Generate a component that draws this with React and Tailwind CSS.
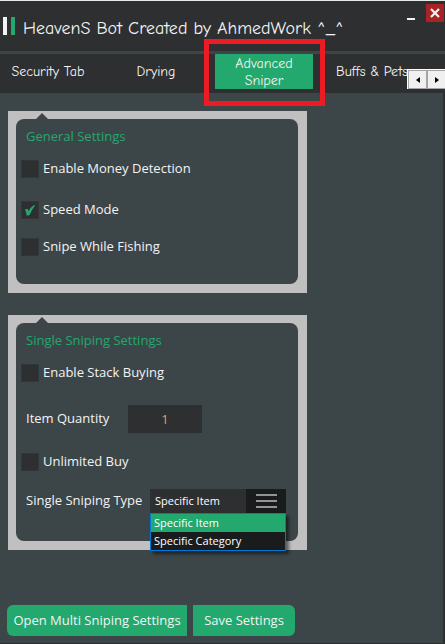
import { useState } from "react";

const tabs = ["Security Tab", "Drying", "Advanced Sniper", "Buffs & Pets"];
const types = ["Specific Item", "Specific Category"];

function Check({ label, defaultChecked = false }) {
  return (
    <label className="flex h-[18px] w-fit items-center gap-1 text-[13px] text-[#f3f3f3]">
      <span className="relative h-[18px] w-[18px] shrink-0">
        <input
          type="checkbox"
          defaultChecked={defaultChecked}
          className="peer block h-[18px] w-[18px] appearance-none border border-[#333638] bg-[#2d2f31]"
        />
        <svg
          viewBox="0 0 18 18"
          className="pointer-events-none absolute inset-0 hidden h-[18px] w-[18px] fill-[#23a86d] peer-checked:block"
        >
          <path d="M4 8.600 6.400 7.800Q7.200 8.800 7.500 10.200 9.600 6.200 12.600 4.200L14.200 4.200Q10.600 8.800 8.600 14L5.800 14.800Q5.200 11.400 4 8.600Z" />
        </svg>
      </span>
      {label}
    </label>
  );
}

function Group({ title, children }) {
  return (
    <section className="w-[299px] bg-[#c0c0c0] pt-2 pr-[9px] pb-[9px] pl-2">
      <div className="relative rounded-lg bg-[#3c4649] px-[5px] pt-[7px]">
        <svg viewBox="0 0 12 6" className="absolute -top-1.5 left-5 h-1.5 w-3 fill-[#3c4649]">
          <path d="M6 0 12 6H0Z" />
        </svg>
        <h2 className="pl-[5px] text-[13px] leading-5 text-[#23a86d]">{title}</h2>
        {children}
      </div>
    </section>
  );
}

export default function App() {
  const [active, setActive] = useState(2);
  const [type, setType] = useState(types[0]);

  return (
    <div className="relative flex min-h-screen flex-col overflow-hidden border-t border-[#e4eaea] bg-[#3c4649] font-['Open_Sans','Noto_Sans',sans-serif]">
      <header className="flex h-[50px] items-start justify-between bg-[#2d2f31] pl-[3px] pr-px">
        <div className="flex items-start gap-2 pt-4">
          <div className="flex gap-1">
            <span className="h-[18px] w-1 bg-[#f3f3f3]" />
            <span className="h-[18px] w-1 bg-[#23a86d]" />
          </div>
          <h1 className="whitespace-nowrap font-['Comic_Sans_MS','Comic_Neue','Open_Sans',sans-serif] text-[18px] leading-6 text-[#f3f3f3]">
            HeavenS Bot Created by AhmedWork ^_^
          </h1>
        </div>
        <div className="flex gap-[11px] pt-[3px]">
          <button aria-label="Minimize" className="flex h-[18px] w-2 items-end pb-0.5">
            <span className="h-0.5 w-2 bg-[#f3f3f3]" />
          </button>
          <button aria-label="Close" className="flex h-[18px] w-[18px] items-center justify-center bg-[#a82323]">
            <svg viewBox="0 0 10 10" className="h-2.5 w-2.5 stroke-[#f3f3f3]" strokeWidth="2.2">
              <path d="M1 1 9 9M9 1 1 9" />
            </svg>
          </button>
        </div>
      </header>

      <nav className="relative mt-[3px] flex h-[39px] items-start gap-2.5 bg-[#2d2f31]">
        {tabs.map((t, i) => (
          <button
            key={t}
            onClick={() => setActive(i)}
            className={
              "flex h-[35px] w-[98px] shrink-0 items-center justify-center px-2 font-['Comic_Sans_MS','Comic_Neue','Open_Sans',sans-serif] text-[14px] leading-[17px] text-[#f3f3f3] first:-ml-px " +
              (i === active ? "bg-[#23a86d]" : "")
            }
          >
            {t}
          </button>
        ))}
        <div className="absolute top-[15px] right-0 flex h-5 border-t border-l border-white">
          <button aria-label="Scroll left" className="flex w-[19px] items-center justify-center border border-[#a5a5a5] bg-[#f0f0f0]">
            <svg viewBox="0 0 4 6" className="h-1.5 w-1 fill-black"><path d="M4 0V6L0 3Z" /></svg>
          </button>
          <button aria-label="Scroll right" className="flex w-[18px] items-center justify-center border-y border-l border-[#a5a5a5] bg-[#f0f0f0]">
            <svg viewBox="0 0 4 6" className="h-1.5 w-1 fill-black"><path d="M0 0V6L4 3Z" /></svg>
          </button>
        </div>
      </nav>

      <main className="grow border-r-2 border-b border-[#2d2f31] pt-[18px] pb-[7px]">
        <div className="flex flex-col gap-[22px] pl-2">
          <Group title="General Settings">
            <div className="flex flex-col pt-3.5 pb-7">
              <Check label="Enable Money Detection" />
              <div className="pt-[23px] pb-[19px]">
                <Check label="Speed Mode" defaultChecked />
              </div>
              <Check label="Snipe While Fishing" />
            </div>
          </Group>

          <Group title="Single Sniping Settings">
            <div className="pt-3.5 pb-7">
              <Check label="Enable Stack Buying" />
              <div className="flex items-center pt-[23px] pb-5 pl-[5px] text-[13px] text-[#f3f3f3]">
                <label htmlFor="quantity" className="w-[102px]">Item Quantity</label>
                <input
                  id="quantity"
                  defaultValue="1"
                  className="h-7 w-[74px] bg-[#2d2f31] text-center text-[13px] text-[#d0a870] outline-none"
                />
              </div>
              <Check label="Unlimited Buy" />
              <div className="flex items-center pt-[18px] pl-[5px] text-[13px] text-[#f3f3f3]">
                <label htmlFor="type" className="w-[124px] whitespace-nowrap">Single Sniping Type</label>
                <div className="relative h-6 w-[136px]">
                  <select
                    id="type"
                    value={type}
                    onChange={(e) => setType(e.target.value)}
                    className="block h-6 w-full appearance-none bg-[#2d2f31] pl-[5px] text-[11px] text-white outline-none"
                  >
                    {types.map((t) => (
                      <option key={t}>{t}</option>
                    ))}
                  </select>
                  <span className="pointer-events-none absolute top-0 right-0 flex h-6 w-10 flex-col items-center justify-center gap-1 bg-[#191b1d]">
                    <i className="h-0.5 w-[21px] bg-[#939495]" />
                    <i className="h-0.5 w-[21px] bg-[#939495]" />
                    <i className="h-0.5 w-[21px] bg-[#939495]" />
                  </span>
                  <ul
                    role="listbox"
                    aria-label="Single Sniping Type"
                    className="absolute top-6 left-0 z-10 w-full border border-[#0078d7] bg-[#191b1d] text-[11px] leading-[18px] text-white shadow-[3px_3px_3px_rgba(0,0,0,0.5)]"
                  >
                    {types.map((t) => (
                      <li
                        key={t}
                        role="option"
                        aria-selected={t === type}
                        onClick={() => setType(t)}
                        className={"pl-[3px] " + (t === type ? "bg-[#23a86d]" : "")}
                      >
                        {t}
                      </li>
                    ))}
                  </ul>
                </div>
              </div>
            </div>
          </Group>
        </div>

        <div className="flex gap-1.5 pt-[55px] pl-[7px] text-[13px] text-[#f3f3f3]">
          <button className="h-[31px] w-[180px] whitespace-nowrap rounded-l-md bg-[#23a86d]">Open Multi Sniping Settings</button>
          <button className="h-[31px] w-[102px] whitespace-nowrap rounded-r-md bg-[#23a86d]">Save Settings</button>
        </div>
      </main>

      <div className="pointer-events-none absolute top-[38px] left-[204px] h-[67px] w-[121px] border-[5px] border-[#ed1c24]" />
    </div>
  );
}
